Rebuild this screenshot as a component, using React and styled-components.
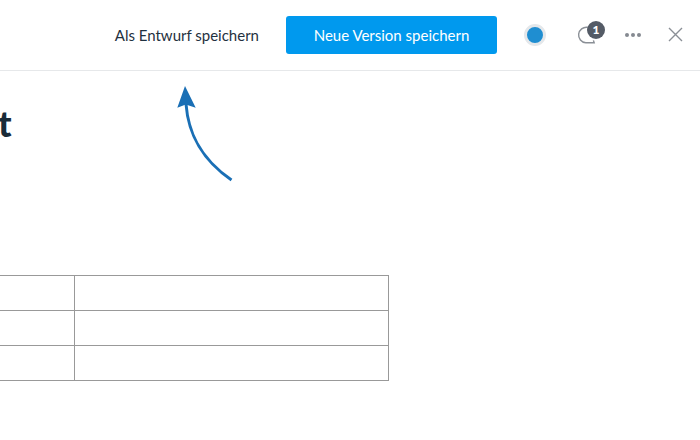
import React from "react";
import styled, { createGlobalStyle } from "styled-components";

const GlobalStyle = createGlobalStyle`
  html, body {
    margin: 0;
    padding: 0;
    background: #fff;
    overflow: hidden;
  }
  body {
    font-family: "Lato", "Liberation Sans", sans-serif;
  }
`;

const Page = styled.div`
  position: relative;
  width: 700px;
  height: 440px;
  overflow: hidden;
`;

const Toolbar = styled.header`
  height: 70px;
  display: flex;
  align-items: center;
  justify-content: flex-end;
  border-bottom: 1px solid #e6e8ea;
  padding-right: 17px;
`;

const DraftButton = styled.button`
  border: 0;
  padding: 0;
  background: none;
  font: 400 15px "Lato", sans-serif;
  color: #1f3140;
  margin-right: 27px;
`;

const SaveButton = styled.button`
  width: 211px;
  height: 38px;
  border: 0;
  border-radius: 3px;
  background: #0099ee;
  color: #fff;
  font: 400 15px "Lato", sans-serif;
  margin-right: 27px;
`;

const StatusDot = styled.span`
  width: 16px;
  height: 16px;
  border-radius: 50%;
  background: #1f8ed1;
  border: 3px solid #e4e7ea;
  margin-right: 31px;
`;

const CommentWrap = styled.span`
  position: relative;
  width: 20px;
  height: 18px;
  margin-right: 28px;
  display: flex;
`;

const Badge = styled.span`
  position: absolute;
  left: 10px;
  top: -5px;
  width: 18px;
  height: 18px;
  border-radius: 50%;
  background: #545b66;
  color: #fff;
  font: 900 12px/18px "Lato", sans-serif;
  text-align: center;
`;

const IconButton = styled.span`
  display: flex;
  margin-right: ${(p) => p.$gap || 0}px;
  margin-bottom: ${(p) => p.$lift || 0}px;
`;

const Main = styled.main`
  margin-left: -289px;
`;

const Title = styled.h1`
  margin: 29px 0 0 287px;
  height: 175px;
  font: 900 36px/46px "Lato", sans-serif;
  color: #1a2b38;
`;

const Grid = styled.table`
  border-collapse: collapse;
  table-layout: fixed;
`;

const Cell = styled.td`
  height: 34px;
  padding: 0;
  border: 1px solid #999;
  width: ${(p) => p.$w}px;
`;

const Arrow = styled.svg`
  position: absolute;
  left: 170px;
  top: 80px;
`;

export default function App() {
  return (
    <Page>
      <GlobalStyle />
      <Toolbar>
        <DraftButton>Als Entwurf speichern</DraftButton>
        <SaveButton>Neue Version speichern</SaveButton>
        <StatusDot />
        <CommentWrap>
          <svg width="20" height="18" viewBox="0 0 20 18" fill="none">
            <path
              d="M10.5 1.3A7.8 7.8 0 1 0 8.8 16.8H17.2L16.4 14.4"
              stroke="#8a8f96"
              strokeWidth="1.4"
            />
          </svg>
          <Badge>1</Badge>
        </CommentWrap>
        <IconButton $gap={27}>
          <svg width="16" height="4" viewBox="0 0 16 4" fill="#858a91">
            <circle cx="2" cy="2" r="2" />
            <circle cx="8" cy="2" r="2" />
            <circle cx="14" cy="2" r="2" />
          </svg>
        </IconButton>
        <IconButton $lift={1}>
          <svg width="15" height="15" viewBox="0 0 15 15" stroke="#8a8f96" strokeWidth="1.4">
            <path d="M1 1l13 13M14 1L1 14" />
          </svg>
        </IconButton>
      </Toolbar>
      <Main>
        <Title>t</Title>
        <Grid>
          <tbody>
            {[0, 1, 2].map((r) => (
              <tr key={r}>
                <Cell $w={362} />
                <Cell $w={313} />
              </tr>
            ))}
          </tbody>
        </Grid>
      </Main>
      <Arrow width="70" height="105" viewBox="170 80 70 105" fill="none">
        <path d="M231.5 180C198 157 188 130 186 104" stroke="#1a6fb5" strokeWidth="3" />
        <path d="M185 86L195.7 107.7L185.8 104.5L177.3 107.7Z" fill="#1a6fb5" />
      </Arrow>
    </Page>
  );
}
